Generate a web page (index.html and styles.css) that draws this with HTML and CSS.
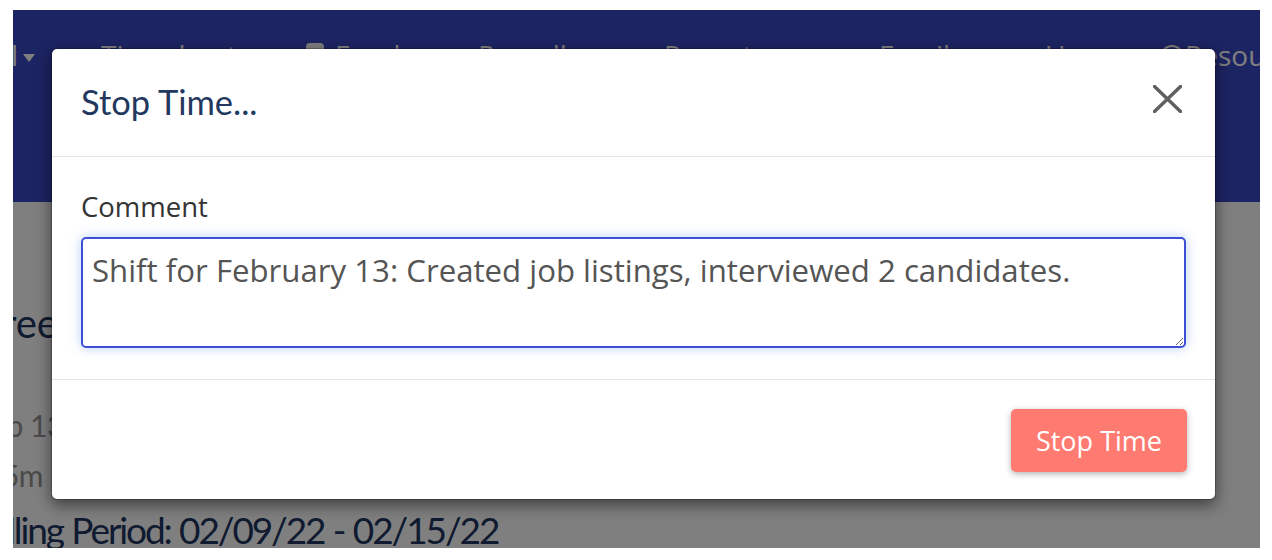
FILE: index.html
```html
<!DOCTYPE html>
<html lang="en">
<head>
<meta charset="utf-8">
<title>Stop Time</title>
<link rel="stylesheet" href="styles.css">
</head>
<body>
<div class="frame">
  <div class="page">
    <nav class="navbar">
      <div class="nav-item nav-first"><span>Manual</span><span class="caret"></span></div>
      <div class="nav-item">Timesheets</div>
      <div class="nav-item"><span class="nav-icon"></span>Employees</div>
      <div class="nav-item">Payroll</div>
      <div class="nav-item">Reports</div>
      <div class="nav-item">Emails</div>
      <div class="nav-item">Users</div>
      <div class="nav-item"><span class="info-icon">i</span>Resources</div>
    </nav>
    <main class="content">
      <h2 class="page-heading">Free Timesheet</h2>
      <p class="meta">Feb 13, 2022</p>
      <p class="meta meta-dur">35m</p>
      <p class="period">Billing Period: 02/09/22 - 02/15/22</p>
    </main>
  </div>
  <div class="backdrop"></div>
  <div class="modal">
    <div class="modal-header">
      <h4 class="modal-title">Stop Time...</h4>
      <button class="close" type="button" aria-label="Close">
        <svg width="29" height="28" viewBox="0 0 29 28"><path d="M1.5 1.5 L27.5 26.5 M27.5 1.5 L1.5 26.5" stroke="#5f5f5f" stroke-width="3.4" stroke-linecap="round" fill="none"/></svg>
      </button>
    </div>
    <div class="modal-body">
      <label class="field-label" for="comment">Comment</label>
      <textarea id="comment" class="field">Shift for February 13: Created job listings, interviewed 2 candidates.</textarea>
    </div>
    <div class="modal-footer">
      <button class="btn-stop" type="button">Stop Time</button>
    </div>
  </div>
</div>
</body>
</html>
```

FILE: styles.css
```css
html, body {
  margin: 0;
  padding: 0;
  background: #ffffff;
}

.frame {
  margin: 10px 0 0 13px;
  width: 1247px;
  height: 538px;
  overflow: hidden;
  position: relative;
  background: #ffffff;
}

.page {
  display: flex;
  flex-direction: column;
  height: 100%;
}

.navbar {
  height: 192px;
  flex: none;
  box-sizing: border-box;
  background: #3a48c6;
  padding-top: 26px;
  display: grid;
  grid-template-columns: 88px 205px 172px 186px 215px 166px 115px 200px;
  align-items: start;
  font-family: "Open Sans", sans-serif;
  font-size: 28px;
  line-height: 38px;
  color: #ffffff;
  white-space: nowrap;
}

.nav-item {
  display: flex;
  align-items: center;
}

.nav-first {
  justify-content: flex-end;
  gap: 5px;
  padding-right: 66px;
}

.caret {
  width: 0;
  height: 0;
  border-left: 6.5px solid transparent;
  border-right: 6.5px solid transparent;
  border-top: 8px solid #ffffff;
  align-self: flex-start;
  margin-top: 18px;
}

.nav-icon {
  width: 18px;
  height: 22px;
  border-radius: 4px;
  background: #ffffff;
  margin-right: 11px;
  align-self: flex-start;
  margin-top: 7px;
}

.info-icon {
  width: 20px;
  height: 20px;
  border: 2px solid #ffffff;
  border-radius: 50%;
  font-size: 14px;
  line-height: 20px;
  text-align: center;
  margin-right: 1px;
  box-sizing: content-box;
  align-self: flex-start;
  margin-top: 9px;
}

.content {
  flex: 1;
  display: flex;
  flex-direction: column;
  margin-left: -32px;
  font-family: "Lato", sans-serif;
}

.page-heading {
  margin: 97px 0 0;
  font-size: 40px;
  line-height: 48px;
  font-weight: 400;
  color: #203460;
  white-space: nowrap;
}

.meta {
  margin: 60px 0 0 -5px;
  font-size: 30px;
  line-height: 36px;
  color: #949494;
  white-space: nowrap;
  letter-spacing: -0.5px;
}

.meta-dur {
  margin-top: 14px;
  margin-left: 4px;
}

.period {
  margin: 14px 0 0 -2px;
  font-size: 37px;
  line-height: 46px;
  letter-spacing: -2.1px;
  word-spacing: 1px;
  color: #203460;
  white-space: nowrap;
}

.backdrop {
  position: absolute;
  inset: 0;
  background: rgba(0, 0, 0, 0.5);
}

.modal {
  position: absolute;
  left: 38px;
  top: 38px;
  width: 1165px;
  box-sizing: border-box;
  background: #ffffff;
  border: 1px solid rgba(0, 0, 0, 0.2);
  border-radius: 6px;
  box-shadow: 0 5px 15px rgba(0, 0, 0, 0.5);
  background-clip: padding-box;
}

.modal-header {
  height: 108px;
  box-sizing: border-box;
  display: flex;
  align-items: center;
  justify-content: space-between;
  padding: 0 33px 2px 29px;
  border-bottom: 1px solid #e5e5e5;
}

.modal-title {
  margin: 0;
  font-family: "Lato", sans-serif;
  font-weight: 400;
  font-size: 34.5px;
  line-height: 38px;
  color: #22385e;
}

.close {
  border: 0;
  background: transparent;
  padding: 0;
  width: 29px;
  height: 28px;
  display: flex;
  cursor: pointer;
  margin-top: -6px;
}

.modal-body {
  padding: 31px 29px 31px;
  display: flex;
  flex-direction: column;
}

.field-label {
  font-family: "Open Sans", sans-serif;
  font-size: 27.5px;
  line-height: 38px;
  color: #333333;
  margin-bottom: 11px;
}

.field {
  display: block;
  width: 100%;
  height: 111px;
  box-sizing: border-box;
  margin: 0;
  padding: 9px 9px;
  font-family: "Open Sans", sans-serif;
  font-size: 31.2px;
  line-height: 44px;
  color: #555555;
  border: 2px solid #3d4fd4;
  border-radius: 5px;
  outline: none;
  box-shadow: 0 0 12px rgba(102, 150, 233, 0.45);
  resize: vertical;
}

.modal-footer {
  border-top: 1px solid #e5e5e5;
  padding: 29px 28px 27px;
  display: flex;
  justify-content: flex-end;
}

.btn-stop {
  height: 63px;
  padding: 0 25px;
  border: 0;
  border-radius: 5px;
  background: #ff7b72;
  color: #ffffff;
  font-family: "Open Sans", sans-serif;
  font-size: 27px;
  box-shadow: 0 2px 6px rgba(0, 0, 0, 0.3);
  cursor: pointer;
}
```
